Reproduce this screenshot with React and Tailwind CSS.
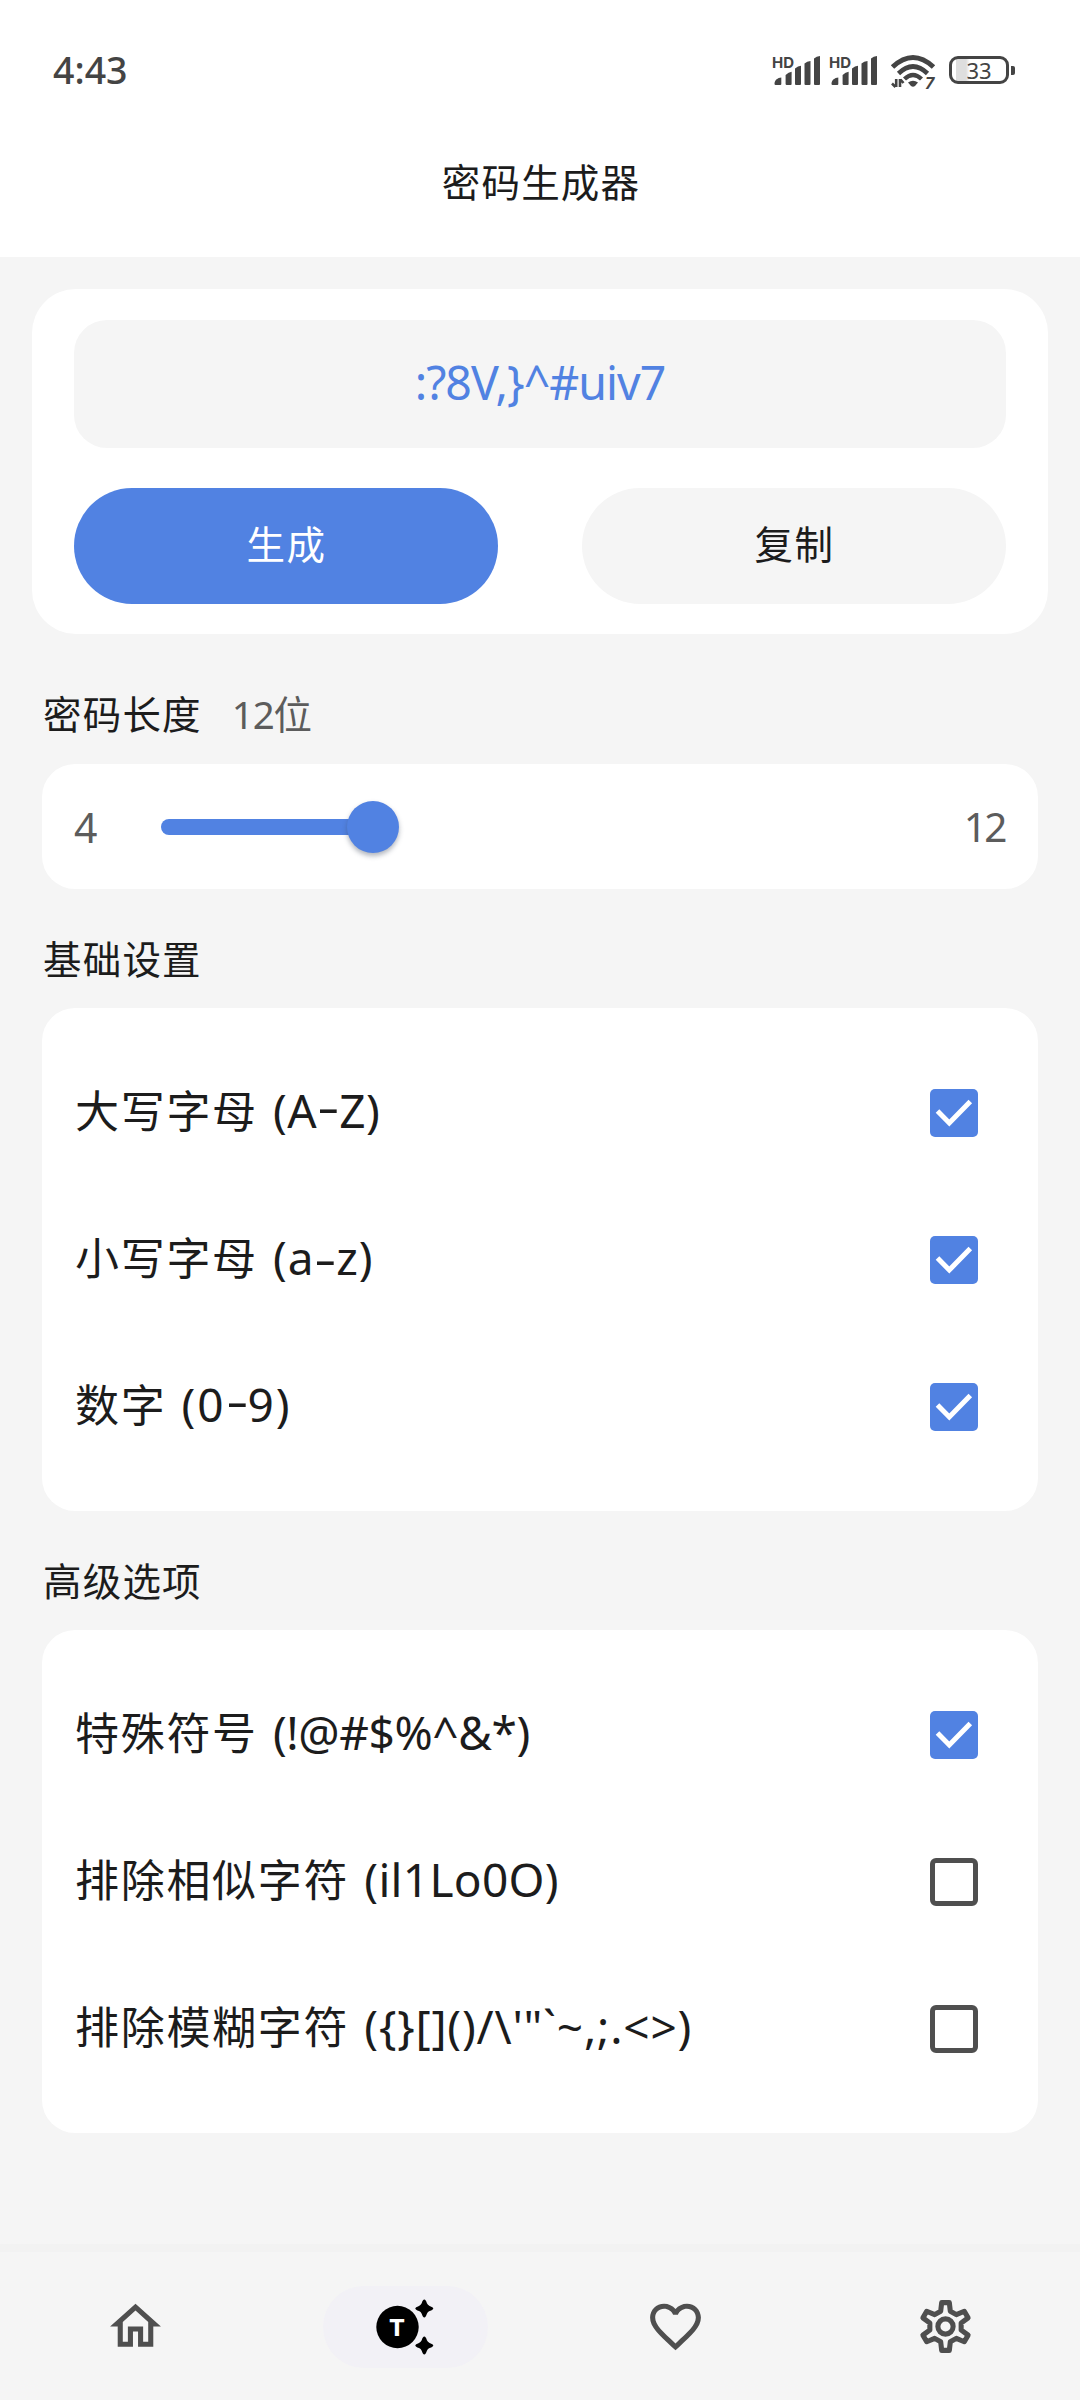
import { useState } from "react";

const GEAR_POINTS = Array.from({ length: 6 }, (_, i) => {
  const a = (i * Math.PI) / 3;
  return [[-1.9, -6.02], [-1.5, -9.4], [1.5, -9.4], [1.9, -6.02]]
    .map(([x, y]) => `${(12 + x * Math.cos(a) - y * Math.sin(a)).toFixed(2)},${(12 + x * Math.sin(a) + y * Math.cos(a)).toFixed(2)}`)
    .join(" ");
}).join(" ");

function Signal() {
  return (
    <div className="relative h-[32px] w-[48px]">
      <span className="absolute left-[-1px] top-0 font-[Inter] text-[15px] leading-[16px] font-bold">HD</span>
      <svg className="absolute left-0 top-0" width="48" height="32" viewBox="0 0 48 32" fill="currentColor">
        <path d="M2.500 30q-1 0-1-1.200c0-3.500 3.200-6 6.800-6.200V29q0 1-1 1z" />
        <path d="M12.600 20q3-3 6-3.200V29q0 1-1 1h-4q-1 0-1-1z" />
        <path d="M22 13.500q3-2.500 6-2.800V29q0 1-1 1h-4q-1 0-1-1z" />
        <path d="M31.500 8.500q2.500-2.200 6-2.600V29q0 1-1 1h-4q-1 0-1-1z" />
        <path d="M41 3.500q2.500-2.200 6-2.600V29q0 1-1 1h-4q-1 0-1-1z" />
      </svg>
    </div>
  );
}

function Wifi() {
  return (
    <div className="relative h-[36px] w-[46px]">
      <svg width="46" height="36" viewBox="0 0 46 36" fill="none" stroke="currentColor" strokeWidth="5">
        <path d="M2.500 13Q23-6 43.500 13" />
        <path d="M8.500 19.500Q23 5.500 37.500 19.500" strokeWidth="4.600" />
        <path d="M14.500 25Q23 17 31.500 25" strokeWidth="4.400" />
        <path d="M18 28.500q5-3.500 10 0l-3 3.500q-2 1.500-4 0z" fill="currentColor" stroke="none" />
        <path d="M6.200 25v8M5.500 33L2 29.500M10 33v-8M10.500 25.500L13.500 29" strokeWidth="2.600" />
      </svg>
      <span className="absolute left-[35px] top-[21px] font-[Inter] text-[16px] leading-[16px] font-bold italic">7</span>
    </div>
  );
}

function StatusBar() {
  return (
    <div className="flex h-[140px] items-start justify-between pl-[53px] pr-[65px] text-[#444444]">
      <span className="mt-[48px] font-['Noto_Sans'] text-[37.5px] leading-[44px] font-medium">4:43</span>
      <div className="mt-[55px] flex items-start">
        <Signal />
        <div className="w-[9px]" />
        <Signal />
        <div className="w-[12px]" />
        <div className="-mt-[1px]"><Wifi /></div>
        <div className="w-[13px]" />
        <div className="mt-[1px] flex items-center gap-[2px]">
          <div className="flex h-[28px] w-[60px] items-center justify-center rounded-[9px] border-[3px] border-[#444444] bg-[linear-gradient(90deg,#ffffff_4px,#dedede_4px,#dedede_14px,#ffffff_18px)]">
            <span className="font-['Noto_Sans'] text-[22px] leading-[22px]">33</span>
          </div>
          <div className="h-[9px] w-[4px] rounded-r-[2px] bg-[#444444]" />
        </div>
      </div>
    </div>
  );
}

function Checkbox({ checked }) {
  if (!checked) return <div className="size-12 rounded-[6px] border-[5px] border-[#4f4f4f]" />;
  return (
    <div className="size-12 rounded-[5px] bg-[#5182e2]">
      <svg width="48" height="48" viewBox="0 0 48 48" fill="none" stroke="#ffffff" strokeWidth="5">
        <path d="M7.500 22L19.300 34L40.300 12.500" />
      </svg>
    </div>
  );
}

function Chars({ text }) {
  // Between capitals and digits the hyphen sits at cap centre.
  const lift = /[A-Z0-9]-/.test(text) ? "-translate-y-[5px]" : "";
  return text.split(/(-)/).map((part, i) =>
    part === "-" ? (
      <span key={i} className={`mr-[3px] ml-[4px] inline-block scale-x-150 tracking-[0px] ${lift}`}>-</span>
    ) : (
      part
    )
  );
}

function Row({ option, checked, onToggle }) {
  return (
    <div className="flex h-[147px] cursor-pointer items-center justify-between pl-[33px] pr-[60px]" onClick={onToggle} role="checkbox" aria-checked={checked}>
      <span className="-mt-[5px] flex items-baseline text-[44px] leading-[60px] whitespace-pre">
        <span className="tracking-[1.7px]">{option.name}</span>
        <span className={`ml-[2px] text-[46px] ${option.spacing}`}><Chars text={option.chars} /></span>
      </span>
      <Checkbox checked={checked} />
    </div>
  );
}

const BASIC = [
  { name: "大写字母 ", chars: "(A-Z)", spacing: "tracking-[0.6px]", on: true },
  { name: "小写字母 ", chars: "(a-z)", spacing: "tracking-[0.9px]", on: true },
  { name: "数字 ", chars: "(0-9)", spacing: "tracking-[2px]", on: true },
];
const ADVANCED = [
  { name: "特殊符号 ", chars: "(!@#$%^&*)", spacing: "tracking-[-0.4px]", on: true },
  { name: "排除相似字符 ", chars: "(il1Lo0O)", spacing: "tracking-[0.3px]", on: false },
  { name: "排除模糊字符 ", chars: "({}[]()/\\'\"`~,;.<>)", spacing: "tracking-[0.8px]", on: false },
];

function OptionCard({ options }) {
  const [on, setOn] = useState(options.map((o) => o.on));
  return (
    <div className="mx-[42px] h-[503px] rounded-[33px] bg-white pt-[31.5px]">
      {options.map((o, i) => (
        <Row key={o.name} option={o} checked={on[i]} onToggle={() => setOn(on.map((v, j) => (j === i ? !v : v)))} />
      ))}
    </div>
  );
}

function Label({ children, extra }) {
  return (
    <div className="flex items-baseline pl-[43px] text-[38.5px] leading-[50px] tracking-[1.2px]">
      <span>{children}</span>
      {extra && <span className="ml-[30px] tracking-[-1.2px] text-[#5c5c5c]">{extra}</span>}
    </div>
  );
}

function TabBar() {
  return (
    <div className="grid h-[156px] grid-cols-4 border-t-[8px] border-[#f2f2f2] text-[#4f4f4f]">
      <div className="mt-[33px] flex h-[82px] items-center justify-center">
        <svg width="61" height="61" viewBox="0 0 24 24" fill="currentColor">
          <path d="M12 5.690l5 4.500V18h-2v-6H9v6H7v-7.810l5-4.500M12 3L2 12h3v8h6v-6h2v6h6v-8h3L12 3z" />
        </svg>
      </div>
      <div className="mt-[34px] flex h-[82px] w-[165px] items-center justify-self-center rounded-full bg-[#f2f1f6] pl-[52px]">
        <div className="relative h-[60px] w-[60px] text-black">
          <svg width="60" height="60" viewBox="0 0 60 60" fill="currentColor">
            <circle cx="22.500" cy="30" r="21.200" />
            <path d="M49.300 2.500q1.500 0 2.600 3.700 .8 1.900 2.700 2.700 3.700 1.400 3.700 2.600t-3.700 2.600q-1.900.800-2.700 2.700-1.100 3.700-2.600 3.700t-2.600-3.700q-.8-1.900-2.700-2.700-3.700-1.400-3.700-2.600t3.700-2.600q1.900-.800 2.700-2.700 1.100-3.700 2.600-3.700z" />
            <path transform="translate(0 37)" d="M49.300 2.500q1.500 0 2.600 3.700 .8 1.900 2.700 2.700 3.700 1.400 3.700 2.600t-3.700 2.600q-1.900.800-2.700 2.700-1.100 3.700-2.600 3.700t-2.600-3.700q-.8-1.900-2.700-2.700-3.700-1.400-3.700-2.600t3.700-2.600q1.900-.800 2.700-2.700 1.100-3.700 2.600-3.700z" />
          </svg>
          <span className="absolute left-[1.5px] top-[18px] w-[42px] text-center font-[Inter] text-[23.500px] leading-[25px] font-extrabold text-white">T</span>
        </div>
      </div>
      <div className="mt-[33px] flex h-[82px] items-center justify-center">
        <svg width="61" height="61" viewBox="0 0 24 24" fill="currentColor">
          <path d="M16.500 3c-1.740 0-3.410.810-4.500 2.090C10.910 3.810 9.240 3 7.500 3 4.420 3 2 5.420 2 8.500c0 3.780 3.400 6.860 8.550 11.540L12 21.350l1.450-1.320C18.600 15.360 22 12.280 22 8.500 22 5.420 19.580 3 16.500 3zm-4.400 15.550l-.1.100-.1-.1C7.140 14.240 4 11.390 4 8.500 4 6.500 5.500 5 7.500 5c1.540 0 3.040.990 3.570 2.360h1.870C13.460 5.990 14.960 5 16.500 5c2 0 3.500 1.500 3.500 3.500 0 2.890-3.140 5.740-7.900 10.050z" />
        </svg>
      </div>
      <div className="mt-[33px] flex h-[82px] items-center justify-center">
        <svg width="61" height="61" viewBox="0 0 24 24" fill="none" stroke="currentColor" strokeWidth="2" strokeLinejoin="round">
          <polygon points={GEAR_POINTS} />
          <circle cx="12" cy="12" r="3" />
        </svg>
      </div>
    </div>
  );
}

export default function App() {
  return (
    <div className="flex h-[2400px] w-[1080px] flex-col bg-[#f5f5f5] font-['Noto_Sans','Noto_Sans_CJK_SC',sans-serif] text-[#1c1c1c]">
      <header className="h-[257px] bg-white">
        <StatusBar />
        <h1 className="mt-[17px] pl-[2px] text-center text-[38.5px] leading-[50px] tracking-[1.200px]">密码生成器</h1>
      </header>
      <main className="flex-1">
        <section className="mx-[32px] mt-[32px] h-[345px] rounded-[44px] bg-white px-[42px] pt-[31px]">
          <div className="flex h-[128px] items-center justify-center rounded-[33px] bg-[#f5f5f5] pb-[5px] text-[46.5px] leading-[60px] tracking-[-1px] text-[#5182e2]">{":?8V,}^#uiv7"}</div>
          <div className="mt-[40px] grid grid-cols-2 gap-[84px] text-[38.5px] tracking-[1.400px]">
            <button className="h-[116px] rounded-full bg-[#5182e2] pb-[2px] pl-px text-white">生成</button>
            <button className="h-[116px] rounded-full bg-[#f5f5f5] pb-[2px] pl-px">复制</button>
          </div>
        </section>
        <div className="mt-[55px]"><Label extra="12位">密码长度</Label></div>
        <section className="mx-[42px] mt-[25px] flex h-[125px] items-center rounded-[33px] bg-white px-[32px] text-[#5c5c5c]">
          <span className="w-[87px] text-[41px] leading-[60px]">4</span>
          <div className="flex flex-1 items-center">
            <div className="h-[16px] w-[195px] rounded-l-full bg-[#5182e2]" />
            <div className="-ml-[9px] size-[52px] rounded-full bg-[#5182e2] shadow-[0_3px_5px_rgba(60,70,90,0.4)]" />
          </div>
          <span className="mr-px text-[40.5px] leading-[60px] tracking-[-2.500px]">12</span>
        </section>
        <div className="mt-[45px] mb-[24px]"><Label>基础设置</Label></div>
        <OptionCard options={BASIC} />
        <div className="mt-[45px] mb-[24px]"><Label>高级选项</Label></div>
        <OptionCard options={ADVANCED} />
      </main>
      <TabBar />
    </div>
  );
}
